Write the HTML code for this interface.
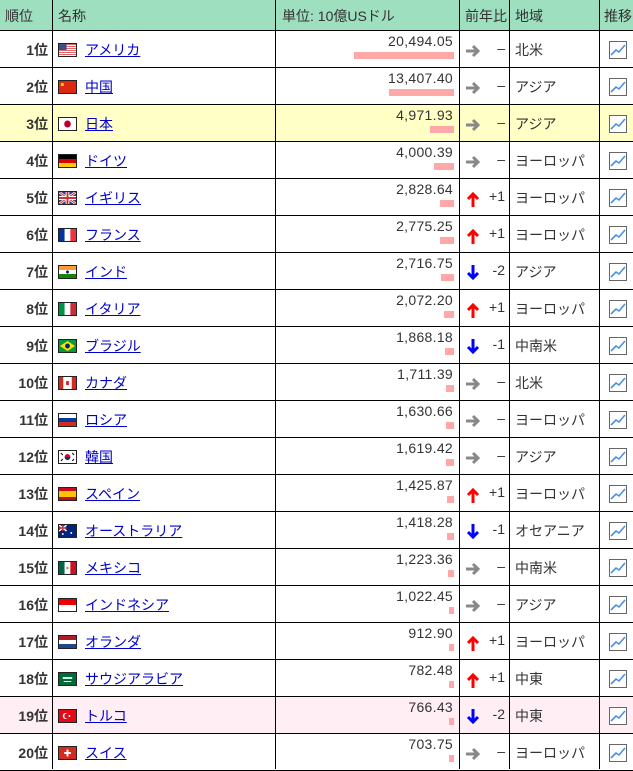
<!DOCTYPE html>
<html><head><meta charset="utf-8"><style>
*{margin:0;padding:0;box-sizing:border-box}
body{width:633px;height:769px;overflow:hidden;background:#fff;font-family:"Liberation Sans","Noto Sans CJK JP",sans-serif;font-size:14px;color:#222;position:relative}
.hdr{position:absolute;left:0;top:0;width:633px;height:31px;background:#9ddfbf;border-bottom:1px solid #000}
.vl{position:absolute;top:0;width:1px;height:769px;background:#000}
.h{position:absolute;top:6px;font-size:14px;color:#333}
.row{position:absolute;left:0;width:633px;height:37px;border-bottom:1px solid #000}
.rk{position:absolute;right:585px;top:9px;font-weight:bold;color:#333}
.fl{position:absolute;left:58px;top:12px;width:19px;height:14px;border:1px solid #222;overflow:hidden}
.fl svg{display:block;width:17px;height:12px}
.nm{position:absolute;left:85px;top:9px;text-decoration:underline;color:#0000cc}
.val{position:absolute;right:180px;top:2px;color:#333;letter-spacing:0.3px}
.bar{position:absolute;right:179px;top:21px;height:7px;background:#ffa8a8}
.ar{position:absolute;left:465px;top:12px}
.ch{position:absolute;right:128px;top:9px;color:#333}
.rg{position:absolute;left:515px;top:9px;color:#333}
.ic{position:absolute;left:609px;top:10px}
</style></head><body>
<div class="hdr"></div>
<div class="h" style="left:5px">順位</div>
<div class="h" style="left:58px">名称</div>
<div class="h" style="left:282px">単位: 10億USドル</div>
<div class="h" style="left:465px">前年比</div>
<div class="h" style="left:515px">地域</div>
<div class="h" style="left:604px">推移</div>
<div id="rows"></div>
<div class="vl" style="left:52px"></div>
<div class="vl" style="left:275px"></div>
<div class="vl" style="left:459px"></div>
<div class="vl" style="left:509px"></div>
<div class="vl" style="left:599px"></div>
<script>
var F={
us:'<svg viewBox="0 0 18 12" preserveAspectRatio="none"><rect width="18" height="12" fill="#fff"/><g fill="#d66">'+[0,2,4,6,8,10].map(function(y){return '<rect y="'+y+'" width="18" height="1"/>'}).join('')+'</g><rect width="8" height="6" fill="#3c4f8a"/></svg>',
cn:'<svg viewBox="0 0 18 12" preserveAspectRatio="none"><rect width="18" height="12" fill="#de2910"/><rect x="2" y="2" width="3" height="3" fill="#ffde00"/></svg>',
jp:'<svg viewBox="0 0 18 12" preserveAspectRatio="none"><rect width="18" height="12" fill="#fff"/><circle cx="9" cy="6" r="3.5" fill="#bc002d"/></svg>',
de:'<svg viewBox="0 0 18 12" preserveAspectRatio="none"><rect width="18" height="4" fill="#000"/><rect y="4" width="18" height="4" fill="#d00"/><rect y="8" width="18" height="4" fill="#fc0"/></svg>',
gb:'<svg viewBox="0 0 18 12" preserveAspectRatio="none"><rect width="18" height="12" fill="#2a3f8a"/><path d="M0 0L18 12M18 0L0 12" stroke="#fff" stroke-width="2.5"/><path d="M0 0L18 12M18 0L0 12" stroke="#c33" stroke-width="1"/><path d="M9 0V12M0 6H18" stroke="#fff" stroke-width="4"/><path d="M9 0V12M0 6H18" stroke="#c33" stroke-width="2"/></svg>',
fr:'<svg viewBox="0 0 18 12" preserveAspectRatio="none"><rect width="6" height="12" fill="#0033a0"/><rect x="6" width="6" height="12" fill="#fff"/><rect x="12" width="6" height="12" fill="#ef3340"/></svg>',
in:'<svg viewBox="0 0 18 12" preserveAspectRatio="none"><rect width="18" height="4" fill="#f93"/><rect y="4" width="18" height="4" fill="#fff"/><rect y="8" width="18" height="4" fill="#138808"/><circle cx="9" cy="6" r="1.5" fill="#008"/></svg>',
it:'<svg viewBox="0 0 18 12" preserveAspectRatio="none"><rect width="6" height="12" fill="#009246"/><rect x="6" width="6" height="12" fill="#fff"/><rect x="12" width="6" height="12" fill="#ce2b37"/></svg>',
br:'<svg viewBox="0 0 18 12" preserveAspectRatio="none"><rect width="18" height="12" fill="#009c3b"/><path d="M9 1L17 6L9 11L1 6Z" fill="#ffdf00"/><circle cx="9" cy="6" r="2.5" fill="#002776"/></svg>',
ca:'<svg viewBox="0 0 18 12" preserveAspectRatio="none"><rect width="18" height="12" fill="#fff"/><rect width="4.5" height="12" fill="#d52b1e"/><rect x="13.5" width="4.5" height="12" fill="#d52b1e"/><rect x="7.5" y="4" width="3" height="4" fill="#d52b1e"/></svg>',
ru:'<svg viewBox="0 0 18 12" preserveAspectRatio="none"><rect width="18" height="4" fill="#fff"/><rect y="4" width="18" height="4" fill="#0039a6"/><rect y="8" width="18" height="4" fill="#d52b1e"/></svg>',
kr:'<svg viewBox="0 0 18 12" preserveAspectRatio="none"><rect width="18" height="12" fill="#fff"/><circle cx="9" cy="6" r="3" fill="#c60c30"/><path d="M6 6a3 3 0 0 0 6 0z" fill="#003478"/><g stroke="#000"><path d="M2 2l2 2M14 2l2 2M2 10l2-2M14 10l2-2"/></g></svg>',
es:'<svg viewBox="0 0 18 12" preserveAspectRatio="none"><rect width="18" height="12" fill="#c60b1e"/><rect y="3" width="18" height="6" fill="#ffc400"/></svg>',
au:'<svg viewBox="0 0 18 12" preserveAspectRatio="none"><rect width="18" height="12" fill="#00247d"/><path d="M0 0L8 6M8 0L0 6" stroke="#fff" stroke-width="1.5"/><path d="M4 0V6M0 3H8" stroke="#c33" stroke-width="1.5"/><circle cx="13" cy="8" r="1" fill="#fff"/><circle cx="4" cy="9" r="1" fill="#fff"/></svg>',
mx:'<svg viewBox="0 0 18 12" preserveAspectRatio="none"><rect width="6" height="12" fill="#006847"/><rect x="6" width="6" height="12" fill="#fff"/><rect x="12" width="6" height="12" fill="#ce1126"/><circle cx="9" cy="6" r="1.3" fill="#8a6"/></svg>',
id:'<svg viewBox="0 0 18 12" preserveAspectRatio="none"><rect width="18" height="6" fill="#e00"/><rect y="6" width="18" height="6" fill="#fff"/></svg>',
nl:'<svg viewBox="0 0 18 12" preserveAspectRatio="none"><rect width="18" height="4" fill="#ae1c28"/><rect y="4" width="18" height="4" fill="#fff"/><rect y="8" width="18" height="4" fill="#21468b"/></svg>',
sa:'<svg viewBox="0 0 18 12" preserveAspectRatio="none"><rect width="18" height="12" fill="#006c35"/><rect x="4" y="4" width="10" height="2" fill="#cfe"/><rect x="5" y="8" width="8" height="1" fill="#fff"/></svg>',
tr:'<svg viewBox="0 0 18 12" preserveAspectRatio="none"><rect width="18" height="12" fill="#e30a17"/><circle cx="7" cy="6" r="3" fill="#fff"/><circle cx="8" cy="6" r="2.4" fill="#e30a17"/><circle cx="11" cy="6" r="1" fill="#fff"/></svg>',
ch:'<svg viewBox="0 0 18 12" preserveAspectRatio="none"><rect width="18" height="12" fill="#d52b1e"/><rect x="8" y="2.5" width="2" height="7" fill="#fff"/><rect x="5.5" y="5" width="7" height="2" fill="#fff"/></svg>'};
var D=[
['us','アメリカ','20,494.05',20494.05,0,'北米'],
['cn','中国','13,407.40',13407.4,0,'アジア'],
['jp','日本','4,971.93',4971.93,0,'アジア'],
['de','ドイツ','4,000.39',4000.39,0,'ヨーロッパ'],
['gb','イギリス','2,828.64',2828.64,1,'ヨーロッパ'],
['fr','フランス','2,775.25',2775.25,1,'ヨーロッパ'],
['in','インド','2,716.75',2716.75,-2,'アジア'],
['it','イタリア','2,072.20',2072.2,1,'ヨーロッパ'],
['br','ブラジル','1,868.18',1868.18,-1,'中南米'],
['ca','カナダ','1,711.39',1711.39,0,'北米'],
['ru','ロシア','1,630.66',1630.66,0,'ヨーロッパ'],
['kr','韓国','1,619.42',1619.42,0,'アジア'],
['es','スペイン','1,425.87',1425.87,1,'ヨーロッパ'],
['au','オーストラリア','1,418.28',1418.28,-1,'オセアニア'],
['mx','メキシコ','1,223.36',1223.36,0,'中南米'],
['id','インドネシア','1,022.45',1022.45,0,'アジア'],
['nl','オランダ','912.90',912.9,1,'ヨーロッパ'],
['sa','サウジアラビア','782.48',782.48,1,'中東'],
['tr','トルコ','766.43',766.43,-2,'中東'],
['ch','スイス','703.75',703.75,0,'ヨーロッパ']];
var AR={
r:'<svg width="16" height="16"><path d="M1 8H13M8 3L13 8L8 13" fill="none" stroke="#888" stroke-width="3"/></svg>',
u:'<svg width="16" height="16"><path d="M8 16V3M3 8L8 3L13 8" fill="none" stroke="#f00" stroke-width="3"/></svg>',
d:'<svg width="16" height="16"><path d="M8 0V13M3 8L8 13L13 8" fill="none" stroke="#00f" stroke-width="3"/></svg>'};
var h='';
D.forEach(function(d,i){
var bg=i==2?'#ffffc6':(i==18?'#ffeef4':'#fff');
var ar,ch;
if(d[4]==0){ar=AR.r;ch='–'}
else if(d[4]>0){ar=AR.u;ch='+'+d[4]}
else{ar=AR.d;ch=''+d[4]}
var w=Math.max(5,Math.round(d[3]/204.94));
h+='<div class="row" style="top:'+(31+37*i)+'px;background:'+bg+'">'+
'<div class="rk">'+(i+1)+'位</div><div class="fl">'+F[d[0]]+'</div><div class="nm">'+d[1]+'</div>'+
'<div class="val">'+d[2]+'</div><div class="bar" style="width:'+w+'px"></div>'+
'<div class="ar">'+ar+'</div><div class="ch">'+ch+'</div><div class="rg">'+d[5]+'</div>'+
'<div class="ic"><svg width="18" height="18"><rect x="0.5" y="0.5" width="17" height="17" fill="#fff" stroke="#666"/><path d="M2 14L7 9L10 11L16 4" fill="none" stroke="#4a90e2" stroke-width="1.6"/></svg></div></div>';
});
document.getElementById('rows').innerHTML=h;
</script>
</body></html>
